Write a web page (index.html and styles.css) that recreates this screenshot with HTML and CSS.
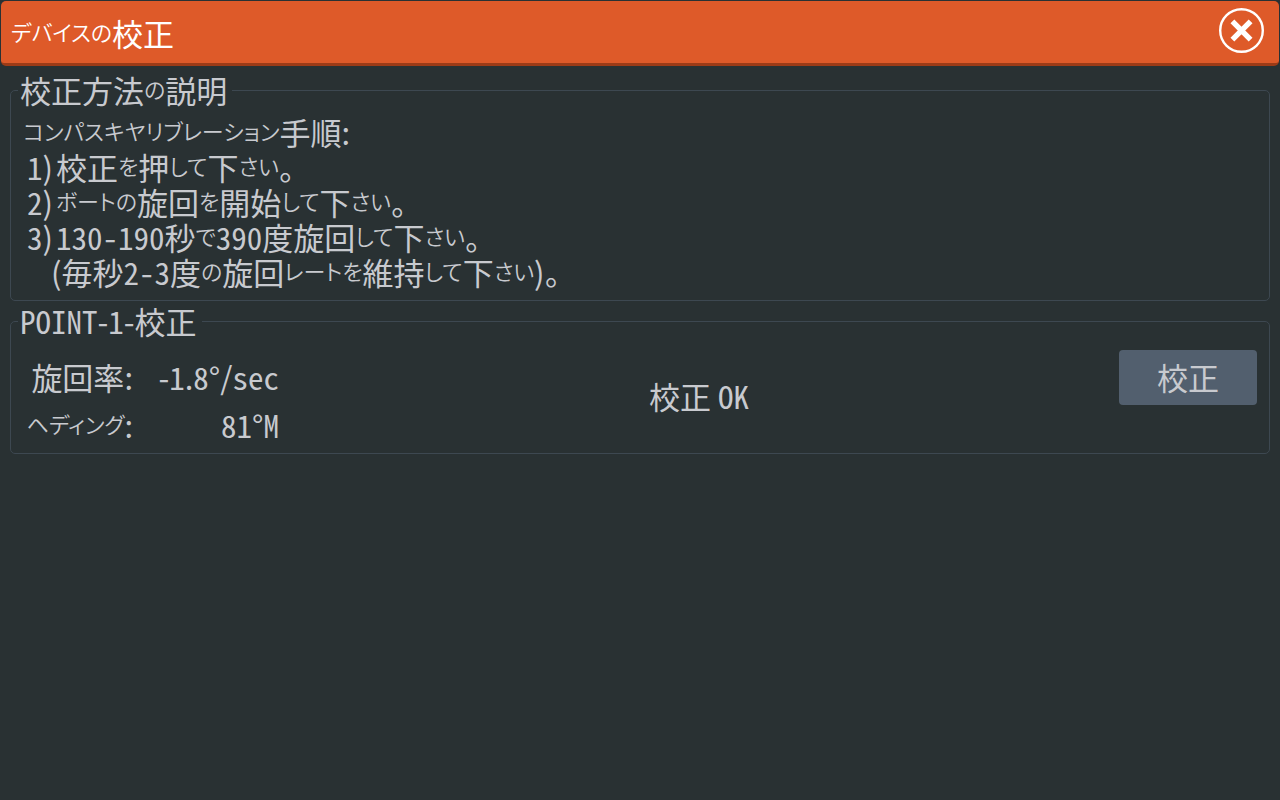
FILE: index.html
```html
<!DOCTYPE html>
<html lang="ja">
<head>
    <meta charset="UTF-8" />
    <meta name="viewport" content="width=device-width, initial-scale=1" />
    <title>デバイスの校正</title>
    <link rel="stylesheet" href="styles.css">
</head>
<body>
    <header class="titlebar">
        <h1><span class="kana">デバイスの</span>校正</h1>
        <button class="close" type="button" aria-label="閉じる">
            <svg viewBox="0 0 46 46" width="46" height="46">
                <circle cx="22.5" cy="22.5" r="21.3" fill="none" stroke="#fff" stroke-width="2.4" />
                <path d="M13.4 13.4L31.6 31.6M31.6 13.4L13.4 31.6" stroke="#fff" stroke-width="5.4" />
            </svg>
        </button>
    </header>
    <main>
        <fieldset class="group">
            <legend>校正方法<span class="kana">の</span>説明</legend>
            <div class="steps">
                <p><span class="kana">コンパスキヤリブレーション</span>手順<span class="mark">:</span></p>
                <p class="step"><span class="number">1<span class="mark">)</span></span>校正<span class="kana">を</span>押<span class="kana">して</span>下<span class="kana">さい</span><span class="mark">。</span></p>
                <p class="step"><span class="number">2<span class="mark">)</span></span><span class="kana">ボートの</span>旋回<span class="kana">を</span>開始<span class="kana">して</span>下<span class="kana">さい</span><span class="mark">。</span></p>
                <p class="step"><span class="number">3<span class="mark">)</span></span>130-190秒<span class="kana">で</span>390度旋回<span class="kana">して</span>下<span class="kana">さい</span><span class="mark">。</span></p>
                <p class="step note"><span class="mark">(</span>毎秒2-3度<span class="kana">の</span>旋回<span class="kana">レートを</span>維持<span class="kana">して</span>下<span class="kana">さい</span><span class="mark">)。</span></p>
            </div>
        </fieldset>
        <fieldset class="group">
            <legend>POINT<span class="mark">-</span>1<span class="mark">-</span>校正</legend>
            <div class="device">
                <dl class="readings">
                    <dt>旋回率<span class="mark">:</span></dt>
                    <dd><span class="mark">-</span>1<span class="mark">.</span>8°<span class="mark">/</span>sec</dd>
                    <dt><span class="kana">ヘディング</span><span class="mark">:</span></dt>
                    <dd>81°M</dd>
                </dl>
                <p class="status">校正<span class="mark"> </span>OK</p>
                <button class="calibrate" type="button">校正</button>
            </div>
        </fieldset>
    </main>
</body>
</html>
```
FILE: styles.css
```css
* {
    box-sizing: border-box;
}
body {
    margin: 0;
    min-height: 100vh;
    background-color: #293133;
    color: #c8cacf;
    font-family: "Noto Sans CJK JP", sans-serif;
    font-size: 31px;
    font-feature-settings: "hwid";
    line-height: 35px;
}
h1, p, dl, dd {
    margin: 0;
}
button {
    font: inherit;
    font-feature-settings: inherit;
    cursor: pointer;
}
.titlebar {
    display: flex;
    justify-content: space-between;
    align-items: center;
    height: 65px;
    margin: 1px 1px 0;
    padding: 0 14px 3px 10px;
    background-color: #de5a29;
    border-bottom: 3px solid #9c3b17;
    border-radius: 5px;
    color: #fff;
}
.titlebar h1 {
    padding-top: 3px;
    font-size: 31px;
    font-weight: normal;
}
.close {
    display: flex;
    padding: 0;
    border: none;
    background: none;
}
.kana {
    font-size: 22px;
    font-weight: 350;
    font-feature-settings: "palt";
    line-height: 22px;
    vertical-align: 5px;
}
/* punctuation keeps its proportional width */
.mark {
    font-feature-settings: "palt";
}
main {
    padding: 8px 10px;
}
.group {
    min-width: 0;
    margin: 0 0 4px;
    padding: 0 12px 11px;
    border: 1px solid #3d4851;
    border-radius: 5px;
}
legend {
    margin-left: -5px;
    padding: 0 5px 0 2px;
    line-height: 32px;
}
.steps {
    padding-top: 8px;
}
.step {
    padding-left: 4px;
}
.number {
    margin-right: 3px;
}
.note {
    padding-left: 28px;
}
.device {
    display: flex;
    align-items: center;
    padding-top: 4px;
}
.group:last-child {
    padding-bottom: 4px;
}
.readings {
    display: grid;
    grid-template-columns: 110px 146px;
    margin-top: 12px;
    line-height: 48px;
    text-align: right;
}
.status {
    flex: 1;
    text-align: center;
}
.calibrate {
    align-self: flex-start;
    width: 138px;
    height: 55px;
    margin-top: 9px;
    padding: 0 0 3px;
    border: none;
    border-radius: 4px;
    background-color: #525f6e;
    color: #c8cacf;
}
```
